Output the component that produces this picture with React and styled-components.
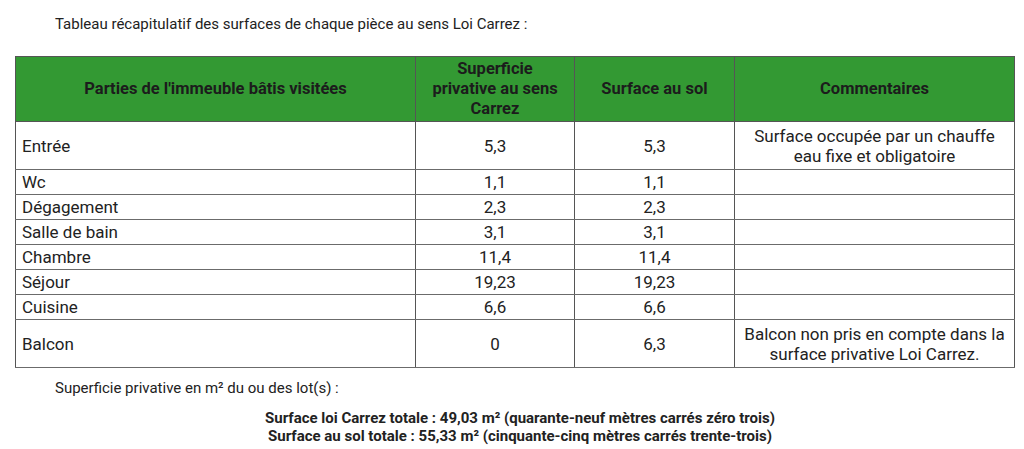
import styled, { createGlobalStyle } from 'styled-components'

const GlobalStyle = createGlobalStyle`
  body {
    margin: 0;
    background: #ffffff;
    font-family: Roboto, "Liberation Sans", sans-serif;
    color: #222222;
  }
`

const Page = styled.div`
  width: 1024px;
  height: 449px;
  padding: 15px 0 0 15px;
  box-sizing: border-box;
  overflow: hidden;
`

const Caption = styled.p`
  margin: 0 0 23px 40px;
  font-size: 15px;
  line-height: 18px;
`

const Table = styled.table`
  width: 999px;
  border-collapse: collapse;
  table-layout: fixed;
  font-size: 17px;
  border: 1.5px solid #555555;
`

const HeadCell = styled.th`
  background: #339933;
  color: #1c1c1c;
  font-weight: 700;
  font-size: 16.5px;
  line-height: 20px;
  height: 64px;
  padding: 0 4px;
  text-align: center;
  border: 1.5px solid #555555;
`

const Cell = styled.td`
  border: 1.5px solid #6b6b6b;
  border-left-color: #555555;
  border-right-color: #555555;
  height: ${({ $tall }) => ($tall ? '47px' : '24px')};
  padding: 0 6px;
  line-height: 20px;
  text-align: ${({ $left }) => ($left ? 'left' : 'center')};
  vertical-align: middle;
`

const Note = styled.p`
  margin: 11px 0 0 40px;
  font-size: 15px;
  line-height: 18px;
`

const Totals = styled.div`
  width: 1010px;
  margin-top: 12px;
  text-align: center;
  font-weight: 700;
  font-size: 15px;
  line-height: 18px;
`

const rows = [
  { name: 'Entrée', carrez: '5,3', sol: '5,3', comment: ['Surface occupée par un chauffe', 'eau fixe et obligatoire'] },
  { name: 'Wc', carrez: '1,1', sol: '1,1' },
  { name: 'Dégagement', carrez: '2,3', sol: '2,3' },
  { name: 'Salle de bain', carrez: '3,1', sol: '3,1' },
  { name: 'Chambre', carrez: '11,4', sol: '11,4' },
  { name: 'Séjour', carrez: '19,23', sol: '19,23' },
  { name: 'Cuisine', carrez: '6,6', sol: '6,6' },
  { name: 'Balcon', carrez: '0', sol: '6,3', comment: ['Balcon non pris en compte dans la', 'surface privative Loi Carrez.'] },
]

export default function App() {
  return (
    <Page>
      <GlobalStyle />
      <Caption>Tableau récapitulatif des surfaces de chaque pièce au sens Loi Carrez :</Caption>
      <Table>
        <colgroup>
          <col style={{ width: 400 }} />
          <col style={{ width: 159 }} />
          <col style={{ width: 160 }} />
          <col style={{ width: 280 }} />
        </colgroup>
        <thead>
          <tr>
            <HeadCell>Parties de l'immeuble bâtis visitées</HeadCell>
            <HeadCell>
              Superficie
              <br />
              privative au sens
              <br />
              Carrez
            </HeadCell>
            <HeadCell>Surface au sol</HeadCell>
            <HeadCell>Commentaires</HeadCell>
          </tr>
        </thead>
        <tbody>
          {rows.map((r) => (
            <tr key={r.name}>
              <Cell $left $tall={!!r.comment}>{r.name}</Cell>
              <Cell $tall={!!r.comment}>{r.carrez}</Cell>
              <Cell $tall={!!r.comment}>{r.sol}</Cell>
              <Cell $tall={!!r.comment}>
                {r.comment && (
                  <>
                    {r.comment[0]}
                    <br />
                    {r.comment[1]}
                  </>
                )}
              </Cell>
            </tr>
          ))}
        </tbody>
      </Table>
      <Note>Superficie privative en m² du ou des lot(s) :</Note>
      <Totals>
        <div>Surface loi Carrez totale : 49,03 m² (quarante-neuf mètres carrés zéro trois)</div>
        <div>Surface au sol totale : 55,33 m² (cinquante-cinq mètres carrés trente-trois)</div>
      </Totals>
    </Page>
  )
}
